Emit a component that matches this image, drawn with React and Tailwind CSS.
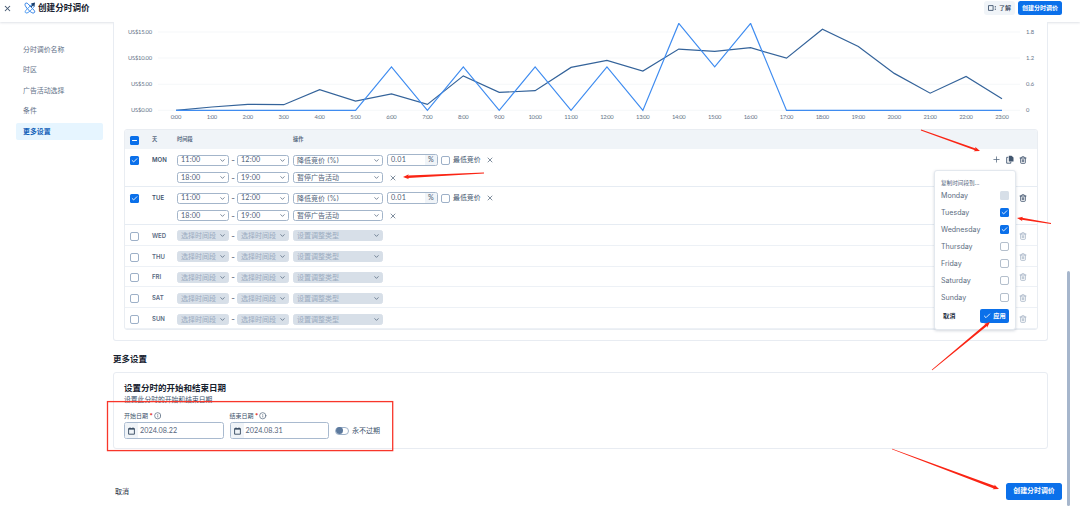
import React from "react";
import { X, Check, ChevronDown, Plus, Trash2, Info, Minus } from "lucide-react";

const dark = [110, 106.6, 104, 104.3, 89.3, 100.7, 93.5, 104, 75.5, 92, 90.3, 67, 60, 70.7, 48.7, 51, 47.3, 57.8, 28.8, 46, 73, 92.8, 76, 98.3];
const blue = [110, 110, 110, 110, 110, 110, 66.5, 110, 66.5, 110, 66.5, 110, 66.5, 110, 23, 66.5, 23, 110, 110, 110, 110, 110, 110, 110];
const step = 826 / 23;
const points = (values) => values.map((v, i) => `${62 + i * step},${v - 22.6}`).join(" ");

function Chart() {
  return (
    <svg width="933" height="106" viewBox="0 0 933 106" className="block shrink-0 fill-[#66758a] font-['Lato',sans-serif] text-[5.8px]">
      {[9, 35, 61.3, 87.3].map((y, i) => (
        <g key={y}>
          <line x1="44" x2="906" y1={y} y2={y} stroke="#f3f5f7" strokeWidth="0.8" />
          <text x="38" y={y + 2} textAnchor="end" textLength={i < 2 ? 24 : 21}>{["US$15.00", "US$10.00", "US$5.00", "US$0.00"][i]}</text>
          <text x="912" y={y + 2}>{["1.8", "1.2", "0.6", "0"][i]}</text>
        </g>
      ))}
      {dark.map((_, i) => (
        <text key={i} x={62 + i * step} y="96" textAnchor="middle" textLength={i < 10 ? 10.5 : 13.5}>{i}:00</text>
      ))}
      <polyline points={points(dark)} fill="none" stroke="#34639a" strokeWidth="1.2" />
      <polyline points={points(blue)} fill="none" stroke="#3f8cf0" strokeWidth="1.2" />
    </svg>
  );
}

function Box({ checked, mixed, muted, light }) {
  if (muted) return <span className="block size-[9px] shrink-0 rounded-[1.5px] bg-[#d7dfe8]" />;
  if (checked || mixed)
    return (
      <span className="flex size-[9px] shrink-0 items-center justify-center rounded-[1.5px] bg-[#0b70ea] text-white">
        {mixed ? <Minus size={7} strokeWidth={3.5} /> : <Check size={7} strokeWidth={3} />}
      </span>
    );
  return <span className={`block size-[9px] shrink-0 rounded-[2px] border bg-white ${light ? "border-[#b4bfcc]" : "border-[#9db0c8]"}`} />;
}

function Select({ text, wide, disabled, latin }) {
  return (
    <span
      className={`flex h-[11px] shrink-0 items-center justify-between overflow-hidden rounded-[2.5px] border pl-[3px] pr-[2px] leading-none whitespace-nowrap ${
        wide ? "w-[90px]" : "w-[52px]"
      } ${latin ? "font-['Lato',sans-serif] text-[7.2px] tracking-[0.2px]" : "text-[7px]"} ${
        disabled ? "border-[#d7dfe8] bg-[#d7dfe8] text-[#9aabc0]" : "border-[#a3b5ca] bg-white text-[#4e6077]"
      }`}
    >
      {text}
      <ChevronDown size={7} strokeWidth={2.6} className="shrink-0 text-[#55677e]" />
    </span>
  );
}

function Slot({ from, to, action, disabled }) {
  return (
    <div className="flex h-[11px] items-center">
      <Select text={from} disabled={disabled} latin={!disabled} />
      <span className="w-[8px] text-center text-[8px] leading-none text-[#3f5068]">-</span>
      <Select text={to} disabled={disabled} latin={!disabled} />
      <span className="w-[4px]" />
      <Select text={action} wide disabled={disabled} />
    </div>
  );
}

function CopyIcon() {
  return (
    <svg width="8" height="9" viewBox="0 0 8 9">
      <path d="M2.8 .8h2.7L7.5 2.6V6.6H2.8z" fill="#42566f" />
      <path d="M2.3 2.3H.7V8.2H4.8V6.8" fill="none" stroke="#42566f" strokeWidth="0.9" />
    </svg>
  );
}

function TrashIcon({ faded }) {
  return <Trash2 size={8} strokeWidth={2.6} className={faded ? "text-[#a9b7c8]" : "text-[#42566f]"} />;
}

function Actions({ full, faded }) {
  return (
    <div className="ml-auto flex h-[11px] items-center gap-[5px] pr-[10px] text-[#52657c]">
      {full && (
        <>
          <Plus size={9} strokeWidth={2} />
          <CopyIcon />
        </>
      )}
      <TrashIcon faded={faded} />
    </div>
  );
}

function ActiveRow({ day, full }) {
  return (
    <div className="flex h-[38px] shrink-0 border-b border-[#e6ecf3] pt-[5px]">
      <div className="w-[21px] pl-[5px] pt-[2px]"><Box checked /></div>
      <div className="flex h-[11px] w-[31px] items-center pl-[6px] text-[6px] font-semibold text-[#40536c]">{day}</div>
      <div className="flex flex-col gap-[6px]">
        <div className="flex items-center">
          <Slot from="11:00" to="12:00" action="降低竞价 (%)" />
          <span className="ml-[4px] flex h-[12px] w-[51px] items-center justify-between rounded-[2.5px] border border-[#a3b5ca] pl-[3px] font-['Lato',sans-serif] text-[7.2px] leading-none tracking-[0.2px] text-[#4e6077]">
            0.01
            <span className="flex h-full w-[12px] items-center justify-center rounded-r-[2px] bg-[#f0f4f8]">%</span>
          </span>
          <span className="ml-[3px]"><Box /></span>
          <span className="ml-[3px] w-[28px] text-[6.9px] leading-none whitespace-nowrap text-[#40536c]">最低竞价</span>
          <X size={8} strokeWidth={2.2} className="ml-[5px] text-[#52657c]" />
        </div>
        <div className="flex items-center">
          <Slot from="18:00" to="19:00" action="暂停广告活动" />
          <X size={8} strokeWidth={2.2} className="ml-[6px] text-[#52657c]" />
        </div>
      </div>
      <Actions full={full} />
    </div>
  );
}

function EmptyRow({ day }) {
  return (
    <div className="flex h-[20.8px] shrink-0 items-center border-b border-[#edf1f6] pt-[2px]">
      <div className="w-[21px] pl-[5px] pt-[1px]"><Box /></div>
      <div className="w-[31px] pl-[6px] text-[6px] font-semibold leading-none text-[#596b82]">{day}</div>
      <Slot from="选择时间段" to="选择时间段" action="设置调整类型" disabled />
      <Actions faded />
    </div>
  );
}

function DayMenu() {
  const days = ["Monday", "Tuesday", "Wednesday", "Thursday", "Friday", "Saturday", "Sunday"];
  return (
    <div className="absolute left-[934px] top-[170px] z-20 flex h-[160px] w-[82px] flex-col rounded-[3px] border border-[#e3e8ee] bg-white px-[6px] pt-[8px] shadow-[0_1px_3px_rgba(40,60,90,0.2)]">
      <div className="h-[8px] text-[5.6px] leading-[8px] text-[#53657b]">复制时间段到...</div>
      {days.map((d, i) => (
        <div key={d} className="flex h-[17px] shrink-0 items-center justify-between text-[7.1px] text-[#5b6c80]">
          <span className="pt-px">{d}</span>
          <Box muted={i === 0} checked={i === 1 || i === 2} light />
        </div>
      ))}
      <div className="mt-[3px] flex h-[14px] items-center justify-between pl-[2px]">
        <span className="text-[6.2px] font-bold text-[#1f2f43]">取消</span>
        <span className="flex h-[14px] w-[29px] items-center justify-center gap-[2px] rounded-[2px] bg-[#0b70ea] text-[6.2px] font-bold leading-none text-white">
          <Check size={8} strokeWidth={2.5} />应用
        </span>
      </div>
    </div>
  );
}

function DateField({ label, value }) {
  return (
    <div className="w-[99.5px]">
      <div className="flex h-[10px] items-center text-[6px] leading-none text-[#40536c]">
        {label}
        <span className="ml-[1.5px] font-bold text-[#e0342b]">*</span>
        <Info size={7.5} strokeWidth={2} className="ml-[1px] text-[#42566f]" />
      </div>
      <div className="mt-px flex h-[17px] items-center overflow-hidden rounded-[2.5px] border border-[#a9bacf] bg-white text-[7px] text-[#55657a]">
        <span className="flex h-full w-[13px] items-center justify-center bg-[#f0f4f8]">
          <svg width="7" height="8" viewBox="0 0 7 8"><path d="M.6 1.5h5.8v5.7H.6zM.6 2.2h5.8M2 .4v1.4M5 .4v1.4" fill="none" stroke="#34475f" strokeWidth="0.9" /></svg>
        </span>
        <span className="pl-[2px] pt-px font-['Lato',sans-serif] text-[7.2px] tracking-[0.05px]">{value}</span>
      </div>
    </div>
  );
}

function Arrow({ from, to, width = 2.6 }) {
  const dx = to[0] - from[0];
  const dy = to[1] - from[1];
  const length = Math.hypot(dx, dy);
  const angle = (Math.atan2(dy, dx) * 180) / Math.PI;
  const h = width / 2;
  return (
    <path
      transform={`translate(${from[0]} ${from[1]}) rotate(${angle})`}
      d={`M0 -.4L${length - 5} ${-h}L${length - 6} ${-h - 1.3}L${length} 0L${length - 6} ${h + 1.3}L${length - 5} ${h}L0 .4Z`}
      fill="#fa2414"
    />
  );
}

function Logo() {
  return (
    <svg width="12" height="12" viewBox="0 0 12 12" fill="none">
      <path d="M1 2.5C1 .5 3 .7 4.2 2L10 8.2c1.5 1.6.5 3.1-1.2 2.8C6.5 10.5 1 5 1 2.5Z" stroke="#2f7fe6" strokeWidth="1" />
      <path d="M8.2 2 2 8.2C.5 9.8 1.2 11.4 3 11c2.2-.6 6.6-5 7.4-7.2" stroke="#4d9bf2" strokeWidth="1" />
      <path d="M7 1.6 11 .6 10.4 4.8 9.2 3.4 7.2 5.3 6.5 4.6 8.3 2.8Z" fill="#153a68" />
    </svg>
  );
}

export default function App() {
  const nav = ["分时调价名称", "时区", "广告活动选择", "条件", "更多设置"];
  return (
    <div className="relative flex h-[512px] w-[1080px] flex-col overflow-hidden bg-white font-['Inter','Noto_Sans_CJK_SC',sans-serif] text-[#42566f]">
      <header className="flex h-[22px] shrink-0 items-start bg-white shadow-[0_1px_2px_rgba(60,80,110,0.16)]">
        <div className="flex h-[16px] items-center pl-[3px]">
          <X size={9} strokeWidth={2.8} className="text-[#42566f]" />
          <span className="ml-[12px]"><Logo /></span>
          <h1 className="ml-[2px] text-[8.6px] font-bold leading-none text-[#15202e]">创建分时调价</h1>
        </div>
        <div className="ml-auto mr-[18px] mt-px flex items-center gap-[3px]">
          <span className="flex h-[14px] w-[31px] items-center justify-center gap-[3px] rounded-[3px] bg-[#f0f4f8] text-[6px] font-medium leading-none text-[#2f4156]">
            <svg width="8" height="6" viewBox="0 0 8 6" fill="none" stroke="#42566f" strokeWidth="0.9"><path d="M.5.6h4.6v4.8H.5zM7.3 1v1.5M7.3 3.5V5" /></svg>
            了解
          </span>
          <span className="flex h-[14px] w-[44px] items-center justify-center rounded-[2.5px] bg-[#0b70ea] text-[6px] font-bold leading-none text-white">创建分时调价</span>
        </div>
      </header>

      <div className="flex min-h-0 flex-1">
        <nav className="flex w-[113px] shrink-0 flex-col gap-[3.5px] pl-[16px] pt-[19px]">
          {nav.map((n, i) => (
            <div key={n} className={`flex h-[17px] w-[87px] items-center rounded-[2px] pl-[7px] pt-px text-[6.9px] leading-none ${i === 4 ? "bg-[#e6f5ff] font-bold text-[#1260b8]" : "text-[#5f7188]"}`}>{n}</div>
          ))}
        </nav>

        <main className="flex w-[935px] shrink-0 flex-col">
          <section className="relative flex h-[319px] shrink-0 flex-col rounded-b-[3px] border border-t-0 border-[#e8ecf2] bg-white">
            <div className="mt-px"><Chart /></div>
            <div className="ml-[10px] flex h-[201px] w-[914px] flex-col overflow-hidden rounded-[3px] border border-[#e9edf2]">
              <div className="flex h-[19px] shrink-0 items-center bg-[#f0f4f8] text-[5.2px] font-semibold leading-none text-[#596b82]">
                <div className="w-[21px] pl-[5px] pt-[2px]"><Box mixed /></div>
                <span className="w-[31px] pl-[6px]">天</span>
                <span className="w-[116px]">时间段</span>
                <span>操作</span>
              </div>
              <ActiveRow day="MON" full />
              <ActiveRow day="TUE" />
              {["WED", "THU", "FRI", "SAT", "SUN"].map((d) => <EmptyRow key={d} day={d} />)}
            </div>
          </section>

          <h2 className="mt-[13px] h-[11px] text-[8.5px] font-bold leading-[11px] text-[#17222f]">更多设置</h2>
          <section className="mt-[7px] flex h-[77px] shrink-0 flex-col rounded-[3px] border border-[#e8ecf2] pl-[10px] pt-[9px]">
            <h3 className="text-[8.5px] font-bold leading-[12px] text-[#17222f]">设置分时的开始和结束日期</h3>
            <p className="mt-px h-[10px] text-[6.8px] leading-[10px] text-[#40536c]">设置此分时的开始和结束日期</p>
            <div className="mt-[6px] flex items-end gap-[6px]">
              <DateField label="开始日期" value="2024.08.22" />
              <DateField label="结束日期" value="2024.08.31" />
              <div className="flex h-[17px] items-center gap-[3px] text-[7px] leading-none text-[#40536c]">
                <span className="flex h-[8px] w-[14px] items-center rounded-full border border-[#9fb2c9]"><span className="size-[7px] rounded-full bg-[#5d7a9e]" /></span>
                永不过期
              </div>
            </div>
          </section>
          <footer className="mt-[34px] flex h-[17px] w-[949px] items-center justify-between pl-[2px]">
            <span className="text-[7px] leading-none text-[#1f2f43]">取消</span>
            <span className="flex h-[17px] w-[56px] items-center justify-center rounded-[2.5px] bg-[#0b70ea] text-[6.9px] font-bold leading-none text-white">创建分时调价</span>
          </footer>
        </main>
        <div className="ml-[19px] mt-[249px] h-[235px] w-[3px] rounded-full bg-[#a6b6cc]" />
      </div>

      <DayMenu />
      <svg width="1080" height="512" className="pointer-events-none absolute left-0 top-0 z-30">
        <rect x="107.5" y="401.6" width="285.2" height="49" fill="none" stroke="#f8362a" strokeWidth="1.3" />
        <Arrow from={[921, 130]} to={[980, 151]} width={2} />
        <Arrow from={[484, 173]} to={[403, 177]} width={2.4} />
        <Arrow from={[1051, 223.5]} to={[1017, 218]} width={2} />
        <Arrow from={[932, 370]} to={[990, 322]} width={2.4} />
        <Arrow from={[892, 449]} to={[999, 489]} />
      </svg>
    </div>
  );
}
